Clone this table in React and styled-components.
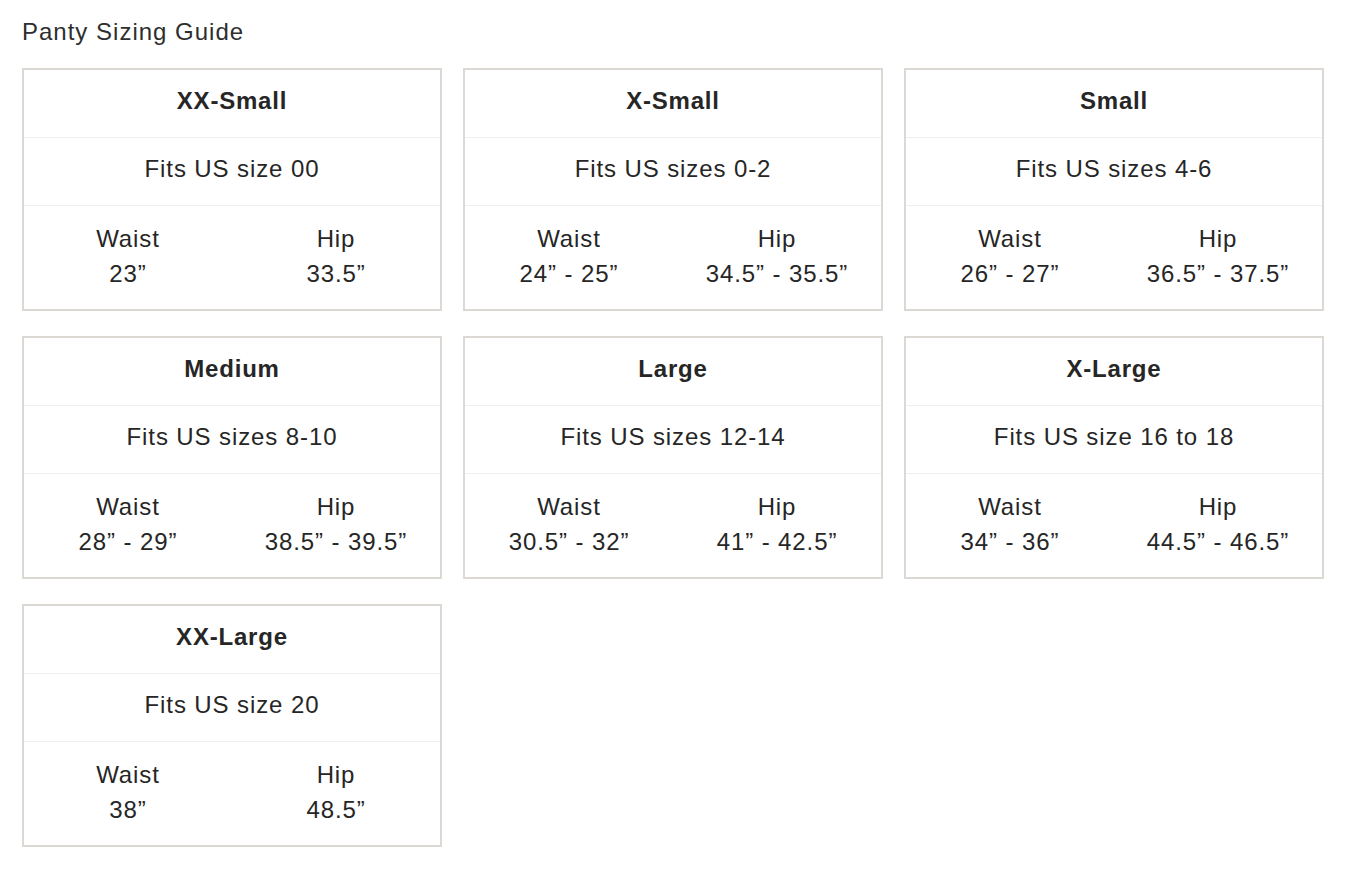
import React from "react";
import styled, { createGlobalStyle } from "styled-components";

const Global = createGlobalStyle`
  html, body { margin: 0; padding: 0; background: #fff; }
  body { font-family: "Liberation Sans", Arial, sans-serif; color: #262626; }
`;

const Page = styled.div`
  padding: 14px 22px 30px 22px;
`;

const Title = styled.h1`
  margin: 0 0 18px 0;
  font-size: 24px;
  font-weight: 400;
  line-height: 36px;
  color: #2e2e2e;
  letter-spacing: 1px;
`;

const Grid = styled.div`
  display: grid;
  grid-template-columns: repeat(3, 420px);
  column-gap: 21px;
  row-gap: 25px;
`;

const Card = styled.div`
  border: 2px solid #dcd9d4;
  display: flex;
  flex-direction: column;
`;

const Row = styled.div`
  height: ${(p) => (p.$first ? 67 : 68)}px;
  box-sizing: border-box;
  padding-bottom: 6px;
  display: flex;
  align-items: center;
  justify-content: center;
  border-top: ${(p) => (p.$first ? "none" : "1px solid #efefef")};
  font-size: 24px;
  font-weight: ${(p) => (p.$bold ? 700 : 400)};
  letter-spacing: ${(p) => (p.$bold ? "0.8px" : "0.9px")};
`;

const Measures = styled.div`
  border-top: 1px solid #efefef;
  height: 104px;
  box-sizing: border-box;
  padding-bottom: 3px;
  display: grid;
  grid-template-columns: 1fr 1fr;
  align-items: center;
`;

const Col = styled.div`
  display: flex;
  flex-direction: column;
  align-items: center;
  font-size: 24px;
  line-height: 35px;
  letter-spacing: 0.9px;
`;

const sizes = [
  ["XX-Small", "Fits US size 00", "23”", "33.5”"],
  ["X-Small", "Fits US sizes 0-2", "24” - 25”", "34.5” - 35.5”"],
  ["Small", "Fits US sizes 4-6", "26” - 27”", "36.5” - 37.5”"],
  ["Medium", "Fits US sizes 8-10", "28” - 29”", "38.5” - 39.5”"],
  ["Large", "Fits US sizes 12-14", "30.5” - 32”", "41” - 42.5”"],
  ["X-Large", "Fits US size 16 to 18", "34” - 36”", "44.5” - 46.5”"],
  ["XX-Large", "Fits US size 20", "38”", "48.5”"],
];

export default function App() {
  return (
    <Page>
      <Global />
      <Title>Panty Sizing Guide</Title>
      <Grid>
        {sizes.map(([name, fits, waist, hip]) => (
          <Card key={name}>
            <Row $first $bold>{name}</Row>
            <Row>{fits}</Row>
            <Measures>
              <Col>
                <span>Waist</span>
                <span>{waist}</span>
              </Col>
              <Col>
                <span>Hip</span>
                <span>{hip}</span>
              </Col>
            </Measures>
          </Card>
        ))}
      </Grid>
    </Page>
  );
}
